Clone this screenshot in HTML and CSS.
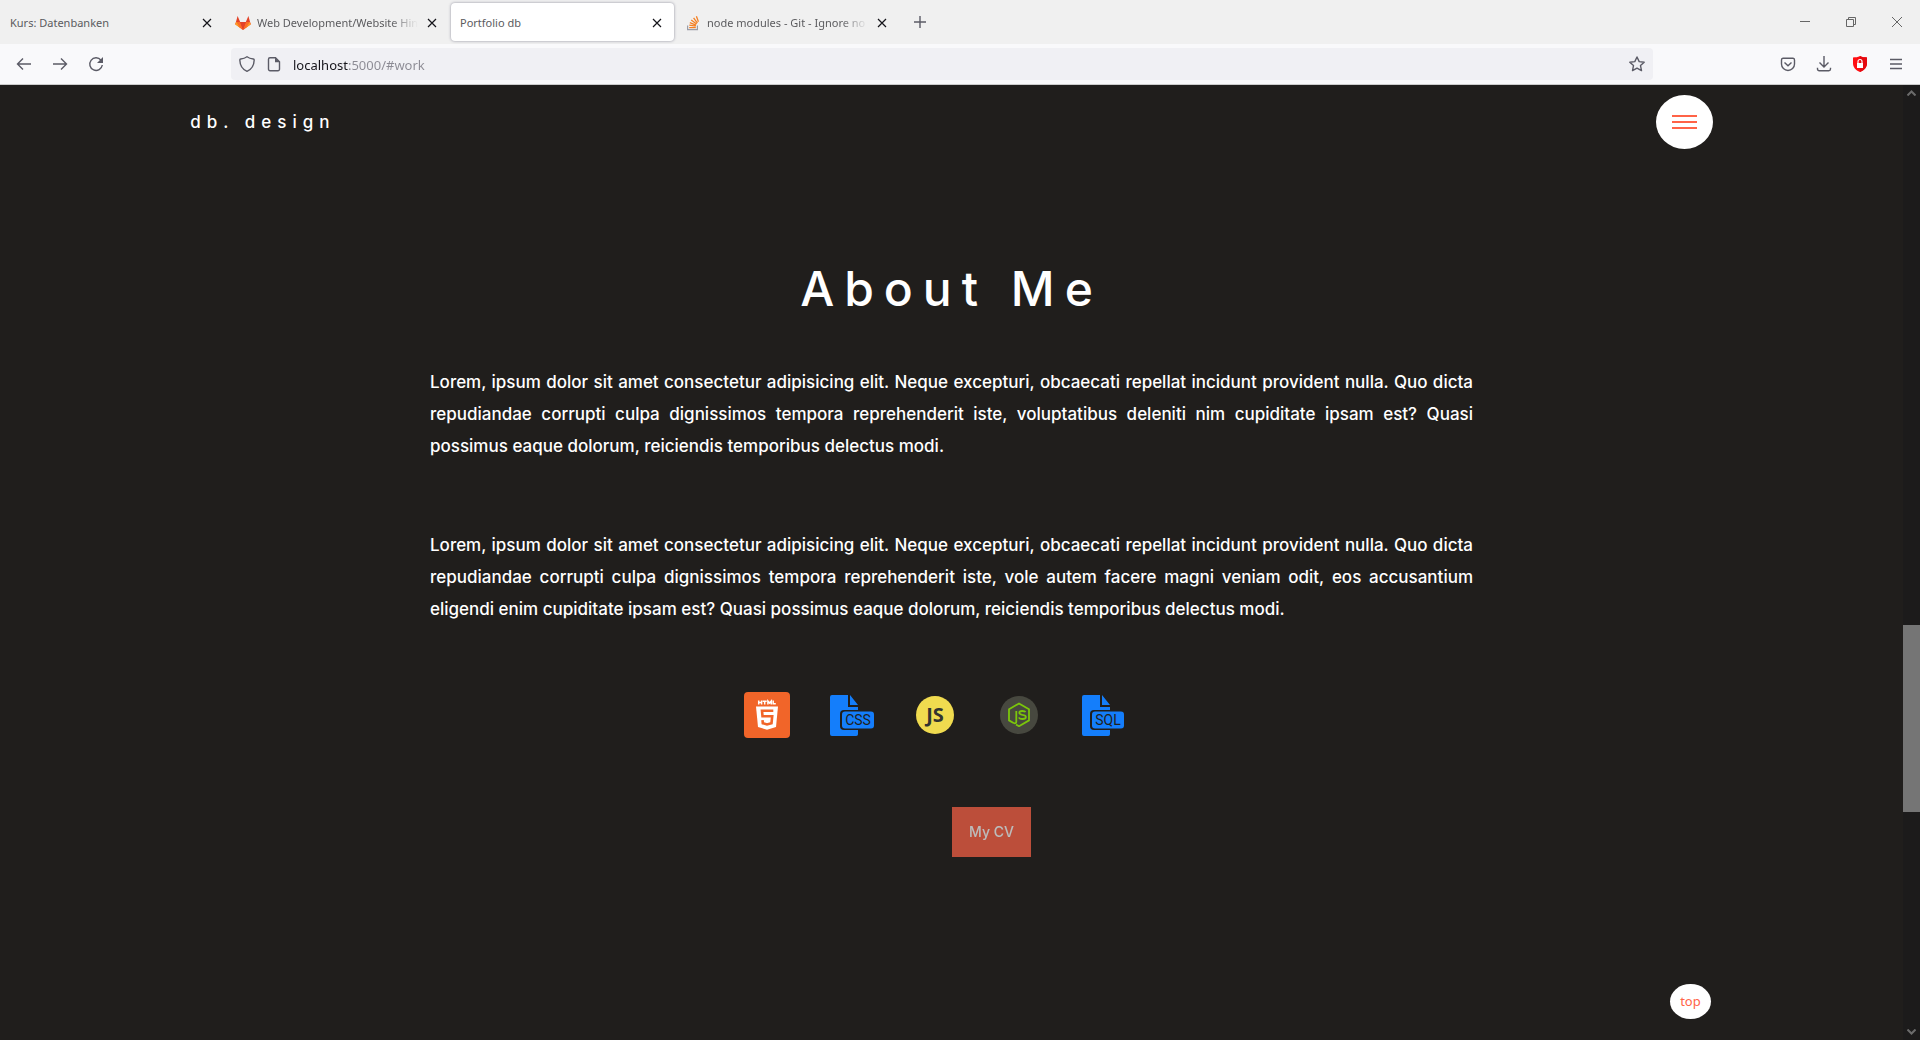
FILE: index.html
```html
<!DOCTYPE html>
<html lang="en">
<head>
<meta charset="utf-8">
<meta name="viewport" content="width=device-width, initial-scale=1">
<title>Portfolio db</title>
<link rel="stylesheet" href="styles.css">
</head>
<body>
<div class="browser">
  <header class="chrome">
    <div class="tabstrip">
      <div class="tab">
        <span class="tab-title">Kurs: Datenbanken</span>
        <button class="tab-close" aria-label="Close tab"><svg width="10" height="10" viewBox="0 0 10 10"><path d="M1 1l8 8M9 1l-8 8"/></svg></button>
      </div>
      <div class="tab">
        <svg class="favicon" width="16" height="16" viewBox="0 0 16 16"><path fill="#e24329" d="M8 15L.3 9.2 2.6 1l2.6 6h5.6l2.6-6 2.3 8.2z"/><path fill="#fc6d26" d="M8 15L.3 9.2 1.1 7h4.1zM8 15l7.7-5.8-.8-2.2h-4.1z"/><path fill="#fca326" d="M8 15L.3 9.2l1-2.2L5 12.7zM8 15l7.7-5.8-1-2.2L11 12.7z"/><path fill="#e24329" d="M8 14.6L5.2 7h5.6z"/></svg>
        <span class="tab-title fade">Web Development/Website Hin</span>
        <button class="tab-close" aria-label="Close tab"><svg width="10" height="10" viewBox="0 0 10 10"><path d="M1 1l8 8M9 1l-8 8"/></svg></button>
      </div>
      <div class="tab active">
        <span class="tab-title">Portfolio db</span>
        <button class="tab-close" aria-label="Close tab"><svg width="10" height="10" viewBox="0 0 10 10"><path d="M1 1l8 8M9 1l-8 8"/></svg></button>
      </div>
      <div class="tab">
        <svg class="favicon" width="16" height="16" viewBox="0 0 16 16" fill="none"><path stroke="#9a9ca6" stroke-width="1.2" d="M2.6 10.5v4.2h9.8v-4.2"/><path stroke="#f48024" stroke-width="1.3" d="M4.2 12.6h6.6M4.3 10.2l6.5 1M4.8 7.6l6.2 2.6M6.2 5l5.4 4M8.6 2.8l3.8 5.4M11.4 1.2l2 5.6"/></svg>
        <span class="tab-title fade">node modules - Git - Ignore no</span>
        <button class="tab-close" aria-label="Close tab"><svg width="10" height="10" viewBox="0 0 10 10"><path d="M1 1l8 8M9 1l-8 8"/></svg></button>
      </div>
      <button class="new-tab" aria-label="New tab"><svg width="12" height="12" viewBox="0 0 12 12"><path d="M6 0v12M0 6h12"/></svg></button>
      <div class="window-controls">
        <button aria-label="Minimize"><svg width="10" height="10" viewBox="0 0 10 10"><path d="M0 4.5h10"/></svg></button>
        <button aria-label="Restore"><svg width="10" height="10" viewBox="0 0 10 10"><path d="M.5 2.5h7v7h-7zM2.5 2.5v-2h7v7h-2"/></svg></button>
        <button aria-label="Close"><svg width="10" height="10" viewBox="0 0 10 10"><path d="M0 0l10 10M10 0L0 10"/></svg></button>
      </div>
    </div>
    <div class="toolbar">
      <nav class="nav-buttons" aria-label="History">
        <button aria-label="Back"><svg width="16" height="16" viewBox="0 0 16 16"><path d="M15 8H1.5M7 2.5L1.5 8 7 13.5"/></svg></button>
        <button aria-label="Forward"><svg width="16" height="16" viewBox="0 0 16 16"><path d="M1 8h13.5M9 2.5L14.5 8 9 13.5"/></svg></button>
        <button aria-label="Reload"><svg width="16" height="16" viewBox="0 0 16 16"><path d="M13 4.2A6.3 6.3 0 1 0 14.3 9"/><path class="solid" d="M15 1v6H9z"/></svg></button>
      </nav>
      <div class="urlbar">
        <svg width="16" height="16" viewBox="0 0 16 16"><path d="M8 .8C6 2.3 4 2.8 1.7 3c-.6.1-.9.5-.9 1C1 9.5 3.6 13.5 8 15.3 12.4 13.5 15 9.5 15.2 4c0-.5-.3-.9-.9-1C12 2.8 10 2.3 8 .8z"/></svg>
        <svg width="16" height="16" viewBox="0 0 16 16"><path d="M9.5 1.7H4A1.5 1.5 0 0 0 2.5 3.2v10A1.5 1.5 0 0 0 4 14.7h8a1.5 1.5 0 0 0 1.5-1.5V5.7z"/><path class="solid" d="M9 1.5v4.8h5z"/></svg>
        <input class="url" type="text" aria-label="Address" value="localhost:5000/#work">
        <button aria-label="Bookmark this page"><svg width="16" height="16" viewBox="0 0 16 16"><path stroke-linejoin="round" d="M8 1l2.2 4.6 5 .6-3.7 3.4 1 5L8 12.2l-4.500 2.400 1-5L.8 6.2l5-.6z"/></svg></button>
      </div>
      <div class="tools">
        <button aria-label="Save to Pocket"><svg width="16" height="16" viewBox="0 0 16 16"><path d="M3 2.2h10A1.7 1.7 0 0 1 14.5 4v4a6.5 6.5 0 0 1-13 0V4A1.7 1.7 0 0 1 3 2.2zM4.500 6.500L8 9.800l3.500-3.300"/></svg></button>
        <button aria-label="Downloads"><svg width="16" height="16" viewBox="0 0 16 16"><path d="M8 0v11M3.5 6.5L8 11l4.5-4.5M1.5 11.8v1.2A1.7 1.7 0 0 0 3.2 14.7h9.6a1.7 1.7 0 0 0 1.7-1.7v-1.2"/></svg></button>
        <button aria-label="Content blocker"><svg class="shield" width="16" height="16" viewBox="0 0 16 16"><path fill="#ff0f13" d="M8 0c2.2 1.2 4.5 1.4 7 1.400v5.8c0 4.2-2.6 6.8-7 8.8-4.400-2-7-4.600-7-8.800V1.400C3.500 1.400 5.800 1.200 8 0z"/><path fill="#e50a10" d="M8 0c2.200 1.200 4.500 1.400 7 1.400v5.800c0 4.200-2.600 6.800-7 8.800z"/><path fill="#fff" d="M5 7h6v5H5z"/><path fill="none" stroke="#fff" stroke-width="1.2" d="M6 7V5.500a2 2 0 0 1 4 0V7"/></svg></button>
        <button aria-label="Application menu"><svg width="16" height="16" viewBox="0 0 16 16"><path d="M2 3.5h12M2 8h12M2 12.5h12"/></svg></button>
      </div>
    </div>
  </header>

  <div class="viewport">
    <div class="page">
      <header class="site-header">
        <a class="logo" href="#home">db. design</a>
        <button class="menu" aria-label="Menu"><span></span><span></span><span></span></button>
      </header>
      <main class="about">
        <h1>About Me</h1>
        <p>Lorem, ipsum dolor sit amet consectetur adipisicing elit. Neque excepturi, obcaecati repellat incidunt provident nulla. Quo dicta repudiandae corrupti culpa dignissimos tempora reprehenderit iste, voluptatibus deleniti nim cupiditate ipsam est? Quasi possimus eaque dolorum, reiciendis temporibus delectus modi.</p>
        <p>Lorem, ipsum dolor sit amet consectetur adipisicing elit. Neque excepturi, obcaecati repellat incidunt provident nulla. Quo dicta repudiandae corrupti culpa dignissimos tempora reprehenderit iste, vole autem facere magni veniam odit, eos accusantium eligendi enim cupiditate ipsam est? Quasi possimus eaque dolorum, reiciendis temporibus delectus modi.</p>
        <ul class="skills">
          <li><svg width="46" height="46" viewBox="0 0 46 46" role="img" aria-label="HTML5"><rect width="46" height="46" rx="4" fill="#f16529"/><path fill="none" stroke="#fff" stroke-width="1.5" d="M14.7 8.5v4M17.600 8.5v4M14.7 10.5h2.9M18.700 9.200h4M20.700 9v3.500M23.900 12.500V9l1.700 2L27.300 9v3.500M29.200 8.500v3.300h2.600"/><path fill="#fff" d="M12 14.500h22l-2 20.500-9 2.800-9-2.800z"/><path fill="none" stroke="#f16529" stroke-width="2.600" d="M29.300 18.800H18l.5 5.400h9.700l-.7 7L23 32.500l-4.200-1.300-.3-3"/></svg></li>
          <li><svg width="46" height="46" viewBox="0 0 46 46" role="img" aria-label="CSS"><path fill="#147efb" d="M4 3h16v12h10V42.2a1.8 1.8 0 0 1-1.8 1.800H4a2 2 0 0 1-2-2V5a2 2 0 0 1 2-2zM22 3l8 10H22z"/><rect x="12" y="18" width="35" height="20" rx="4" fill="#201e1c"/><rect x="14" y="19.500" width="32" height="17" rx="3" fill="#147efb"/><text class="file-label" x="30" y="33" text-anchor="middle">CSS</text></svg></li>
          <li><svg width="46" height="46" viewBox="0 0 46 46" role="img" aria-label="JavaScript"><circle cx="23" cy="23" r="19" fill="#f0db4f"/><text class="js-label" x="23" y="30" text-anchor="middle">JS</text></svg></li>
          <li><svg width="46" height="46" viewBox="0 0 46 46" role="img" aria-label="Node.js"><circle cx="23" cy="23" r="19" fill="#47483f"/><path fill="none" stroke="#7bc60b" stroke-width="1.800" stroke-linejoin="round" d="M18 31.200l-5-2.800V17.200L23 11.500l10 5.700v11.200L23 34.200l-3-1.700"/><path fill="none" stroke="#7bc60b" stroke-width="1.800" d="M20.300 19v10.500q0 2.300-2.300 1.700M29.500 20.200q-.6-1.200-3.200-1.200-3 0-3 1.800 0 1.500 3.200 2 3.400.4 3.400 2.200 0 2-3.400 2-3.200 0-3.500-1.700"/></svg></li>
          <li><svg width="46" height="46" viewBox="0 0 46 46" role="img" aria-label="SQL"><path fill="#147efb" d="M4 3h16v12h10V42.2a1.8 1.8 0 0 1-1.8 1.800H4a2 2 0 0 1-2-2V5a2 2 0 0 1 2-2zM22 3l8 10H22z"/><rect x="10" y="18" width="35" height="20" rx="4" fill="#201e1c"/><rect x="12" y="19.500" width="32" height="17" rx="3" fill="#147efb"/><text class="file-label" x="28" y="33" text-anchor="middle">SQL</text></svg></li>
        </ul>
        <a class="cv" href="#cv">My CV</a>
      </main>
      <a class="to-top" href="#home">top</a>
    </div>
    <div class="scrollbar" aria-hidden="true">
      <svg width="9" height="6" viewBox="0 0 9 6"><path d="M.5 5.5l4-4 4 4"/></svg>
      <div class="track"><div class="thumb"></div></div>
      <svg width="9" height="6" viewBox="0 0 9 6"><path d="M.5.5l4 4 4-4"/></svg>
    </div>
  </div>
</div>
</body>
</html>
```
FILE: styles.css
```css
* { box-sizing: border-box; }
body { margin: 0; background: #201e1c; }
button { border: 0; background: none; padding: 0; cursor: pointer; display: flex; align-items: center; justify-content: center; }
svg { display: block; flex: none; }

.browser { display: flex; flex-direction: column; min-height: 100vh; }

/* Browser chrome */
.chrome { font-family: "Noto Sans", sans-serif; }
.chrome svg { fill: none; stroke: #5b5b66; stroke-width: 1.4; }
.chrome .solid { fill: #5b5b66; stroke: none; }
.chrome .favicon, .chrome .shield { stroke: none; }
.tabstrip { display: flex; align-items: center; height: 44px; background: #f0f0f0; }
.tab { display: flex; align-items: center; gap: 6px; width: 223px; height: 38px; margin: 0 1px; padding: 2px 9px 0; border-radius: 4px; }
.tab.active { background: #fff; box-shadow: 0 0 3px #8f8f9d; }
.tab-title { flex: 1; font-size: 11px; line-height: 16px; color: #5b5b5e; white-space: nowrap; }
.tab-title.fade { mask-image: linear-gradient(to left, transparent, #000 28px); }
.tab-close { width: 16px; height: 20px; }
.chrome .tab-close svg { stroke: #15141a; stroke-width: 1.2; }
.new-tab { width: 40px; height: 40px; }
.window-controls { display: flex; margin-left: auto; }
.window-controls button { width: 46px; height: 44px; }
.chrome .window-controls svg { stroke: #666; stroke-width: 1; }
.toolbar { display: flex; align-items: center; height: 41px; background: #f9f9fb; border-bottom: 1px solid #ccc; }
.nav-buttons { display: flex; gap: 4px; padding-left: 8px; margin-right: 119px; }
.nav-buttons button, .tools button { width: 32px; height: 32px; }
.urlbar { flex: 1; display: flex; align-items: center; gap: 11px; height: 32px; padding: 0 8px; background: #f0f0f4; border-radius: 4px; }
.url { flex: 1; min-width: 0; border: 0; padding: 2px 0 0; outline: 0; font: 13px/20px "Noto Sans", sans-serif; color: transparent; background: linear-gradient(to right, #15141a 56px, #8b8a93 56px); -webkit-background-clip: text; background-clip: text; }
.tools { display: flex; gap: 4px; margin-left: 119px; padding-right: 8px; }

/* Page */
.viewport { flex: 1; display: flex; color: #fff; font-family: Inter, sans-serif; font-weight: 500; }
.page { flex: 1; position: relative; background: #201e1c; }
.site-header { display: flex; align-items: center; justify-content: space-between; padding: 10px 10% 0; }
.logo { color: #fff; font-size: 17px; line-height: 20px; letter-spacing: 6px; text-decoration: none; }
.menu { flex-direction: column; gap: 4px; width: 57px; height: 54px; border-radius: 50%; background: #fff; }
.menu span { width: 25px; height: 2px; background: tomato; }
.about { width: 90%; max-width: 1043px; margin: 0 auto; padding-top: 110px; text-align: center; }
h1 { margin: 0 0 47px; font-size: 48px; line-height: 60px; font-weight: 500; letter-spacing: 10px; }
p { margin: 0 0 67px; font-size: 17px; line-height: 32px; text-align: justify; }
.skills { display: flex; justify-content: center; gap: 38px; list-style: none; margin: 0 34px 69px 0; padding: 0; }
.skills svg { overflow: visible; }
.file-label { font: 400 14px Roboto, sans-serif; fill: #201e1c; }
.js-label { font: 700 20px "Noto Sans", sans-serif; fill: #323330; }
.cv { display: inline-block; margin-left: 80px; padding: 15px 17px; background: tomato; color: #fff; font-size: 14px; line-height: 20px; opacity: .7; text-decoration: none; }
.to-top { position: absolute; right: 10%; bottom: 21px; margin-right: 2px; padding: 7px 10px; border-radius: 50%; background: #fff; color: tomato; font: 400 13px/21px "Noto Sans", sans-serif; text-decoration: none; }

.scrollbar { width: 17px; display: flex; flex-direction: column; align-items: center; padding: 5px 0; background: #1c1b1b; }
.scrollbar svg { fill: none; stroke: #6b6b6b; stroke-width: 2; }
.track { flex: 1; width: 100%; display: grid; grid-template-rows: 529fr 187fr 217fr; }
.thumb { grid-row: 2; background: #757575; }
```
